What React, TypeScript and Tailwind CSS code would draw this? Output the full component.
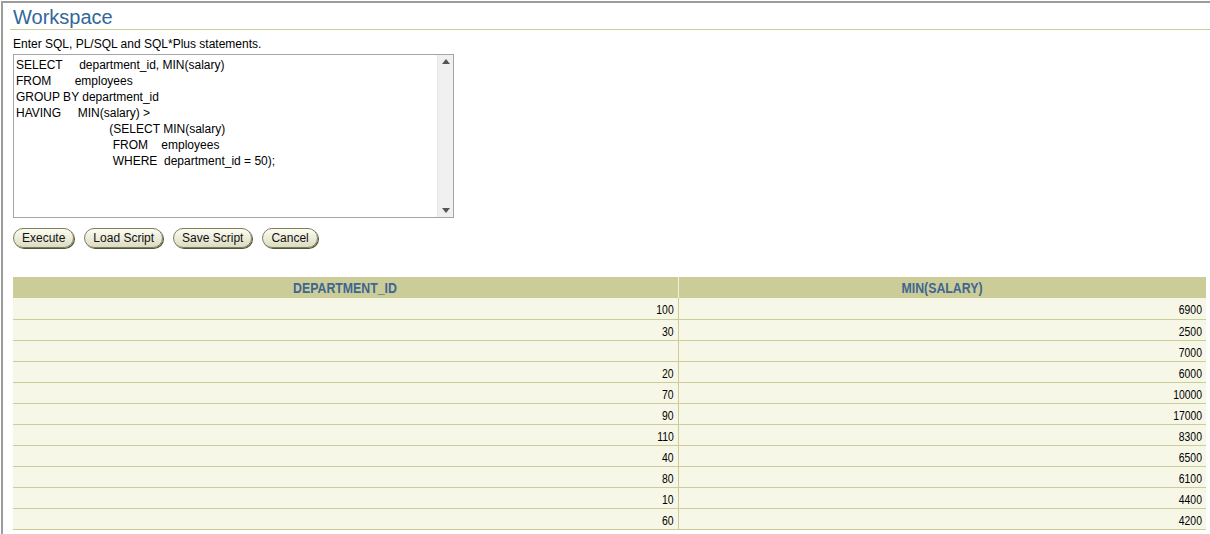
const rows: [string, string][] = [
  ["100", "6900"],
  ["30", "2500"],
  ["", "7000"],
  ["20", "6000"],
  ["70", "10000"],
  ["90", "17000"],
  ["110", "8300"],
  ["40", "6500"],
  ["80", "6100"],
  ["10", "4400"],
  ["60", "4200"],
];

const sql = `SELECT     department_id, MIN(salary)
FROM       employees
GROUP BY department_id
HAVING     MIN(salary) >
                            (SELECT MIN(salary)
                             FROM    employees
                             WHERE  department_id = 50);`;

const buttons = ["Execute", "Load Script", "Save Script", "Cancel"];

// fake classic scrollbar on the right of the text box
function ScrollBar() {
  return (
    <div className="w-[16px] shrink-0 bg-[#f0f0f0] border-l border-[#e6e6e6] flex flex-col justify-between items-center py-[4px]">
      <svg width="8" height="5" viewBox="0 0 8 5">
        <path d="M0 5 L4 0 L8 5 Z" fill="#555" />
      </svg>
      <svg width="8" height="5" viewBox="0 0 8 5">
        <path d="M0 0 L8 0 L4 5 Z" fill="#555" />
      </svg>
    </div>
  );
}

export default function App() {
  return (
    <div className="w-[1210px] h-[534px] overflow-hidden bg-white pl-px pt-px font-['Liberation_Sans',Arial,sans-serif]">
      <div className="h-full border-l-2 border-t-2 border-[#9c9c9c] pl-[7px]">
        {/* header */}
        <div className="border-b border-[#cccc99] pl-[3px] pt-[3px] h-[27px]">
          <h1 className="text-[20px] leading-[22px] text-[#336699]">Workspace</h1>
        </div>
        <div className="pl-[3px]">
          <p className="text-[12px] leading-[14px] text-black mt-[7px]">
            Enter SQL, PL/SQL and SQL*Plus statements.
          </p>
          <div className="mt-[3px] flex w-[441px] h-[164px] border border-[#a5a5a5] bg-white">
            <textarea
              readOnly
              defaultValue={sql}
              spellCheck={false}
              className="block flex-1 h-full resize-none overflow-hidden bg-white px-[2px] pt-[2px] text-[12px] leading-[16px] text-black outline-none whitespace-pre font-['Liberation_Sans',Arial,sans-serif]"
            />
            <ScrollBar />
          </div>
          <div className="flex gap-[10px] mt-[10px]">
            {buttons.map((b) => (
              <button
                key={b}
                className="h-[20px] rounded-full border border-[#7d7d5e] bg-gradient-to-b from-[#fcfcf2] to-[#dcdcc2] px-[8px] text-[12px] leading-[18px] text-[#111] shadow-[1px_1px_0_#55553a]"
              >
                {b}
              </button>
            ))}
          </div>
          <table className="mt-[29px] w-[1193px] border-collapse table-fixed text-[13px] leading-[20px]">
            <colgroup>
              <col className="w-[665px]" />
              <col className="w-[528px]" />
            </colgroup>
            <thead>
              <tr className="bg-[#cccc99]">
                <th className="h-[21px] p-0 border-r border-[#f0f0dc] text-center align-middle">
                  <span className="inline-block align-top leading-[21px] translate-y-px scale-x-[0.88] text-[14px] font-bold text-[#3e6690]">DEPARTMENT_ID</span>
                </th>
                <th className="h-[21px] p-0 text-center align-middle">
                  <span className="inline-block align-top leading-[21px] translate-y-px scale-x-[0.88] text-[14px] font-bold text-[#3e6690]">MIN(SALARY)</span>
                </th>
              </tr>
            </thead>
            <tbody>
              {rows.map(([d, s], i) => (
                <tr key={i} className="bg-[#f7f7e7]">
                  <td className="h-[21px] p-0 pr-[4px] border-b border-r border-[#cccc99] text-right align-middle">
                    <span className="inline-block align-top leading-[20px] translate-y-[2px] origin-right scale-x-[0.8] text-black">{d}</span>
                  </td>
                  <td className="h-[21px] p-0 pr-[4px] border-b border-[#cccc99] text-right align-middle">
                    <span className="inline-block align-top leading-[20px] translate-y-[2px] origin-right scale-x-[0.8] text-black">{s}</span>
                  </td>
                </tr>
              ))}
            </tbody>
          </table>
        </div>
      </div>
    </div>
  );
}
